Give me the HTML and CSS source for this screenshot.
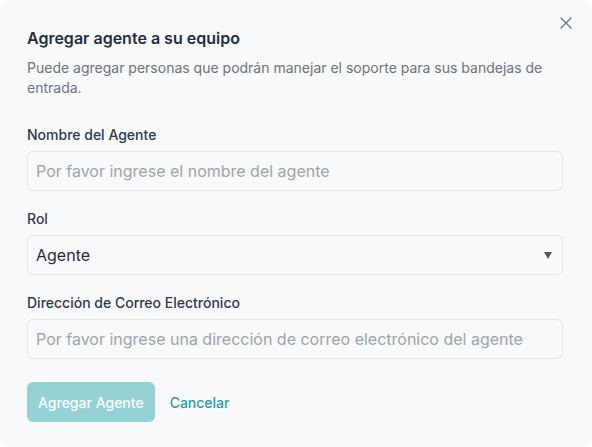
FILE: index.html
```html
<!DOCTYPE html>
<html lang="es">
<head>
  <meta charset="UTF-8">
  <meta name="viewport" content="width=device-width, initial-scale=1.0">
  <title>Agregar agente</title>
  <link rel="stylesheet" href="styles.css">
</head>
<body>
  <div class="modal">
    <button class="close" type="button" aria-label="Cerrar">
      <svg width="12" height="12" viewBox="0 0 12 12" fill="none" stroke="currentColor" stroke-width="1.3" stroke-linecap="round">
        <path d="M1 1L11 11M11 1L1 11"/>
      </svg>
    </button>
    <div class="header">
      <h2 class="title">Agregar agente a su equipo</h2>
      <p class="desc">Puede agregar personas que podrán manejar el soporte para sus bandejas de entrada.</p>
    </div>
    <form class="form">
      <label class="field">
        <span class="label">Nombre del Agente</span>
        <input class="input" type="text" placeholder="Por favor ingrese el nombre del agente">
      </label>
      <label class="field">
        <span class="label">Rol</span>
        <span class="select-wrap">
          <select class="input select">
            <option>Agente</option>
            <option>Administrador</option>
          </select>
          <span class="caret"></span>
        </span>
      </label>
      <label class="field">
        <span class="label">Dirección de Correo Electrónico</span>
        <input class="input" type="email" placeholder="Por favor ingrese una dirección de correo electrónico del agente">
      </label>
      <div class="actions">
        <button class="btn-primary" type="submit" disabled>Agregar Agente</button>
        <button class="btn-link" type="button">Cancelar</button>
      </div>
    </form>
  </div>
</body>
</html>
```

FILE: styles.css
```css
* {
  box-sizing: border-box;
}
body {
  margin: 0;
  background-color: #ffffff;
  font-family: Inter, "Noto Sans", sans-serif;
}
.modal {
  position: relative;
  width: 592px;
  height: 447px;
  background-color: #f8f9fb;
  border-radius: 10px;
  padding: 26px 29px 0 27px;
}
.close {
  position: absolute;
  top: 17px;
  right: 20px;
  width: 12px;
  height: 12px;
  padding: 0;
  border: none;
  background: none;
  color: #6b7280;
  cursor: pointer;
}
.close svg {
  display: block;
}
.title {
  margin: 0;
  font-size: 16px;
  line-height: 24px;
  font-weight: 600;
  color: #1f2d3d;
}
.desc {
  margin: 8px 0 0;
  font-size: 14px;
  line-height: 20px;
  color: #6b7280;
}
.form {
  margin-top: 27px;
}
.field {
  display: block;
  margin-bottom: 18px;
}
.label {
  display: block;
  font-size: 14px;
  line-height: 20px;
  font-weight: 500;
  color: #2c3a4a;
  margin-bottom: 6px;
}
.input {
  display: block;
  width: 100%;
  height: 40px;
  padding: 0 8px;
  border: 1px solid #e3e5e8;
  border-radius: 6px;
  background-color: #f8f9fb;
  font-family: inherit;
  font-size: 16px;
  color: #1f2d3d;
  outline: none;
}
.input::placeholder {
  color: #9ca3af;
}
.select-wrap {
  position: relative;
  display: block;
}
.select {
  appearance: none;
  -webkit-appearance: none;
}
.caret {
  position: absolute;
  right: 11px;
  top: 17px;
  width: 0;
  height: 0;
  border-left: 4px solid transparent;
  border-right: 4px solid transparent;
  border-top: 7px solid #55595f;
  pointer-events: none;
}
.actions {
  display: flex;
  align-items: center;
  gap: 15px;
  margin-top: 23px;
}
.btn-primary {
  height: 40px;
  padding: 0 11px;
  border: none;
  border-radius: 6px;
  background-color: #94d1d4;
  color: #ffffff;
  font-family: inherit;
  font-size: 14px;
  font-weight: 500;
}
.btn-link {
  padding: 0;
  border: none;
  background: none;
  color: #26a0a8;
  font-family: inherit;
  font-size: 14px;
  font-weight: 500;
  cursor: pointer;
}
```
